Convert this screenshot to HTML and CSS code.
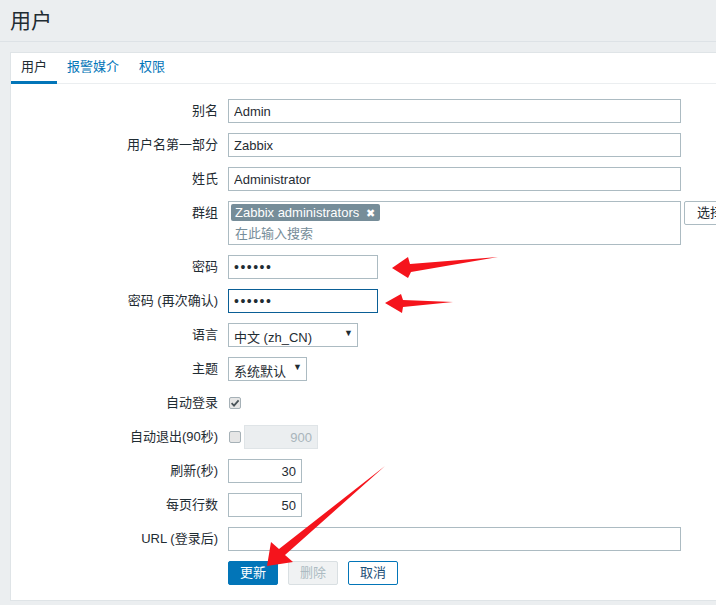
FILE: index.html
```html
<!DOCTYPE html>
<html lang="zh-CN">
<head>
<meta charset="utf-8">
<title>用户</title>
<link rel="stylesheet" href="styles.css">
</head>
<body>
<div class="page">
  <header class="page-header"><h1>用户</h1></header>
  <div class="panel">
    <nav class="tabs">
      <span class="tab active">用户</span>
      <span class="tab">报警媒介</span>
      <span class="tab">权限</span>
    </nav>
    <form class="form-grid">
      <label class="lbl">别名</label>
      <div class="field"><input class="input wide" type="text" value="Admin"></div>

      <label class="lbl">用户名第一部分</label>
      <div class="field"><input class="input wide" type="text" value="Zabbix"></div>

      <label class="lbl">姓氏</label>
      <div class="field"><input class="input wide" type="text" value="Administrator"></div>

      <label class="lbl">群组</label>
      <div class="field row-top">
        <div class="multiselect">
          <span class="chip">Zabbix administrators <span class="chip-x">✖</span></span>
          <span class="ms-placeholder">在此输入搜索</span>
        </div>
        <span class="btn-select">选择</span>
      </div>

      <label class="lbl">密码</label>
      <div class="field"><input class="input pw" type="password" value="123456"></div>

      <label class="lbl">密码 (再次确认)</label>
      <div class="field"><input class="input pw focused" type="password" value="123456"></div>

      <label class="lbl">语言</label>
      <div class="field"><div class="select lang"><span class="sel-text">中文 (zh_CN)</span><span class="sel-arrow">▼</span></div></div>

      <label class="lbl">主题</label>
      <div class="field"><div class="select theme"><span class="sel-text">系统默认</span><span class="sel-arrow">▼</span></div></div>

      <label class="lbl">自动登录</label>
      <div class="field"><span class="checkbox checked"><svg viewBox="0 0 12 12" width="12" height="12"><path d="M2.6 6.2 L5 8.6 L9.6 3.4" fill="none" stroke="#4a5459" stroke-width="1.8"/></svg></span></div>

      <label class="lbl">自动退出(90秒)</label>
      <div class="field"><span class="checkbox"></span><input class="input num disabled" type="text" value="900" disabled></div>

      <label class="lbl">刷新(秒)</label>
      <div class="field"><input class="input num short" type="text" value="30"></div>

      <label class="lbl">每页行数</label>
      <div class="field"><input class="input num short" type="text" value="50"></div>

      <label class="lbl">URL (登录后)</label>
      <div class="field"><input class="input wide" type="text" value=""></div>

      <span class="lbl"></span>
      <div class="field buttons">
        <span class="btn primary">更新</span>
        <span class="btn disabled-btn">删除</span>
        <span class="btn alt">取消</span>
      </div>
    </form>
  </div>
</div>
<svg class="arrows" width="716" height="605" viewBox="0 0 716 605">
  <polygon points="392,268 408,257 410,264 498,257 411,272 408,278" fill="#f5141c"/>
  <polygon points="385,303 401,294 403,300 453,302 403,307 402,313" fill="#f5141c"/>
  <polygon points="267,566 271,542 279,549 385,466 285,555 293,562" fill="#f5141c"/>
</svg>
</body>
</html>
```

FILE: styles.css
```css
* { box-sizing: border-box; }
html, body {
  margin: 0;
  padding: 0;
  background: #ebeef0;
  overflow: hidden;
  width: 716px;
  height: 605px;
}
body {
  font-family: "Liberation Sans", Arial, "Noto Sans CJK SC", sans-serif;
  font-size: 13px;
  color: #1f2c33;
  position: relative;
}
.page { width: 900px; }
.page-header {
  height: 42px;
  border-bottom: 1px solid #dde2e6;
  padding-left: 10px;
}
.page-header h1 {
  margin: 0;
  font-size: 21px;
  font-weight: normal;
  line-height: 41px;
  color: #1f2c33;
}
.panel {
  margin: 10px 0 0 10px;
  background: #ffffff;
  border: 1px solid #dfe4e7;
  width: 860px;
}
.tabs {
  display: flex;
  height: 31px;
  border-bottom: 1px solid #ebeef0;
}
.tab {
  padding: 0 10px;
  line-height: 28px;
  color: #0275b8;
  border-bottom: 3px solid transparent;
  margin-bottom: -1px;
}
.tab.active {
  color: #1f2c33;
  border-bottom-color: #0275b8;
}
.form-grid {
  display: grid;
  grid-template-columns: 207px 1fr;
  column-gap: 10px;
  row-gap: 10px;
  padding: 15px 0 15px 0;
  margin: 0;
}
.lbl {
  text-align: right;
  line-height: 24px;
  white-space: nowrap;
}
.field {
  display: flex;
  align-items: center;
  min-height: 24px;
}
.field.row-top { align-items: flex-start; }
.input {
  height: 24px;
  border: 1px solid #acbbc2;
  background: #fff;
  font-family: inherit;
  font-size: 13px;
  color: #1f2c33;
  padding: 0 5px;
  margin: 0;
  outline: none;
  border-radius: 0;
}
.input.wide { width: 453px; }
.input.pw { width: 150px; font-size: 14px; letter-spacing: 1.5px; }
.input.focused { border-color: #0a5f96; }
.input.num { text-align: right; }
.input.short { width: 74px; }
.input.disabled {
  width: 74px;
  background: #ebeef0;
  color: #a9b5bb;
  border-color: #dfe4e7;
  margin-left: 3px;
}
.multiselect {
  width: 453px;
  height: 44px;
  border: 1px solid #acbbc2;
  padding: 2px 2px 0 2px;
  display: flex;
  flex-direction: column;
  align-items: flex-start;
}
.chip {
  background: #768d99;
  color: #fff;
  height: 17px;
  line-height: 17px;
  padding: 0 5px 0 4px;
  border-radius: 2px;
  white-space: nowrap;
}
.chip-x { font-size: 11px; margin-left: 3px; }
.ms-placeholder {
  color: #768d99;
  line-height: 22px;
  padding-left: 4px;
  padding-top: 2px;
}
.btn-select {
  margin-left: 3px;
  height: 24px;
  line-height: 22px;
  border: 1px solid #acbbc2;
  border-radius: 2px;
  padding: 0 12px;
  background: #fff;
  white-space: nowrap;
}
.select {
  height: 24px;
  border: 1px solid #acbbc2;
  display: flex;
  align-items: flex-end;
  justify-content: space-between;
  padding: 0 4px 1px 5px;
  overflow: hidden;
}
.select.lang { width: 130px; }
.select.theme { width: 79px; }
.sel-text { line-height: 18px; height: 16px; overflow: hidden; white-space: nowrap; }
.sel-arrow { font-size: 9px; line-height: 17px; padding-bottom: 2px; align-self: center; }
.checkbox {
  width: 12px;
  height: 12px;
  border: 1px solid #a6b1b7;
  border-radius: 2px;
  background: #e6e6e6;
  margin-left: 1px;
  display: inline-flex;
  align-items: center;
  justify-content: center;
}
.checkbox svg { display: block; margin: -1px; }
.buttons { gap: 10px; }
.btn {
  width: 50px;
  height: 24px;
  line-height: 22px;
  text-align: center;
  border: 1px solid;
  border-radius: 2px;
}
.btn.primary { background: #0275b8; border-color: #0275b8; color: #fff; }
.btn.disabled-btn { background: #f0f2f3; border-color: #d9dfe2; color: #acbbc2; }
.btn.alt { background: #fff; border-color: #0275b8; color: #1e4f78; }
.arrows {
  position: absolute;
  left: 0;
  top: 0;
  pointer-events: none;
}
```
